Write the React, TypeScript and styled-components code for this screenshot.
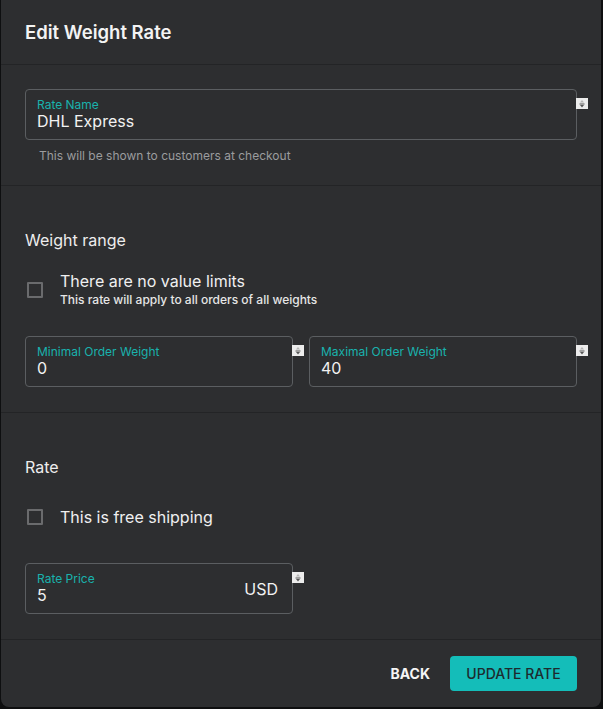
import styled, { createGlobalStyle } from "styled-components";

const GlobalStyle = createGlobalStyle`
  html, body {
    margin: 0;
    padding: 0;
    background: #0e0f10;
  }
  body {
    font-family: Inter, "Noto Sans", "Liberation Sans", sans-serif;
    -webkit-font-smoothing: antialiased;
  }
`;

const Spinner = () => (
  <SpinBox>
    <svg width="12" height="11" viewBox="0 0 12 11">
      <rect width="12" height="11" fill="#ececec" />
      <path d="M4 4.5 L6 2 L8 4.5 Z" fill="#b4b4b4" />
      <rect x="3.5" y="5.5" width="5" height="1" fill="#555" />
      <path d="M4 7 L6 9.5 L8 7 Z" fill="#555" />
    </svg>
  </SpinBox>
);

type FieldProps = {
  label: string;
  value: string;
  suffix?: string;
};

const Field = ({ label, value, suffix }: FieldProps) => (
  <FieldBox>
    <FieldText>
      <FieldLabel>{label}</FieldLabel>
      <FieldValue>{value}</FieldValue>
    </FieldText>
    {suffix && <Suffix>{suffix}</Suffix>}
    <Spinner />
  </FieldBox>
);

export default () => {
  return (
    <>
      <GlobalStyle />
      <Dialog>
        <Header>
          <Title>Edit Weight Rate</Title>
        </Header>

        <Section $top={24} $bottom={21}>
          <Field label="Rate Name" value="DHL Express" />
          <Helper>This will be shown to customers at checkout</Helper>
        </Section>

        <Section $top={42} $bottom={25}>
          <Heading>Weight range</Heading>
          <CheckRow $gap={19}>
            <Box />
            <div>
              <CheckTitle>There are no value limits</CheckTitle>
              <CheckSub>This rate will apply to all orders of all weights</CheckSub>
            </div>
          </CheckRow>
          <FieldGrid $gap={28}>
            <Field label="Minimal Order Weight" value="0" />
            <Field label="Maximal Order Weight" value="40" />
          </FieldGrid>
        </Section>

        <Section $top={42} $bottom={25}>
          <Heading>Rate</Heading>
          <CheckRow $gap={26}>
            <Box />
            <CheckTitle $tall>This is free shipping</CheckTitle>
          </CheckRow>
          <FieldGrid $gap={34}>
            <Field label="Rate Price" value="5" suffix="USD" />
          </FieldGrid>
        </Section>

        <Footer>
          <TextButton>Back</TextButton>
          <PrimaryButton>Update Rate</PrimaryButton>
        </Footer>
      </Dialog>
    </>
  );
};

const Dialog = styled.div`
  width: 600px;
  height: 707px;
  margin-left: 1px;
  background: #2d2e30;
  border-radius: 0 0 8px 8px;
  display: flex;
  flex-direction: column;
  overflow: hidden;
`;

const Header = styled.div`
  height: 64px;
  padding: 0 24px;
  display: flex;
  align-items: center;
  border-bottom: 1px solid #232426;
`;

const Title = styled.h1`
  margin: 0;
  font-size: 18.5px;
  font-weight: 600;
  color: #f3f3f3;
`;

const Section = styled.div<{ $top: number; $bottom: number }>`
  padding: ${({ $top, $bottom }) => `${$top}px 24px ${$bottom}px 24px`};
  border-bottom: 1px solid #232426;
`;

const Heading = styled.div`
  font-size: 16px;
  line-height: 24px;
  color: #ededed;
`;

const CheckRow = styled.div<{ $gap: number }>`
  margin-top: ${({ $gap }) => $gap}px;
  display: flex;
  align-items: center;
  gap: 17px;
  padding-left: 2px;
`;

const Box = styled.span`
  width: 16px;
  height: 16px;
  box-sizing: border-box;
  border: 2px solid #6a6b6d;
  border-radius: 1px;
  flex-shrink: 0;
`;

const CheckTitle = styled.div<{ $tall?: boolean }>`
  font-size: 16px;
  line-height: ${({ $tall }) => ($tall ? 24 : 20)}px;
  color: #f0f0f0;
`;

const CheckSub = styled.div`
  font-size: 12px;
  line-height: 17px;
  font-weight: 500;
  color: #e6e6e6;
`;

const FieldGrid = styled.div<{ $gap: number }>`
  margin-top: ${({ $gap }) => $gap}px;
  display: grid;
  grid-template-columns: 1fr 1fr;
  gap: 16px;
`;

const FieldBox = styled.div`
  position: relative;
  height: 51px;
  box-sizing: border-box;
  border: 1px solid #5b5e61;
  border-radius: 4px;
  padding: 7px 14px 0 11px;
  display: flex;
  align-items: center;
`;

const FieldText = styled.div`
  flex: 1;
  align-self: flex-start;
`;

const FieldLabel = styled.div`
  font-size: 12px;
  line-height: 15px;
  color: #19b2ad;
`;

const FieldValue = styled.div`
  font-size: 16px;
  line-height: 19px;
  color: #f2f2f2;
`;

const Suffix = styled.div`
  font-size: 16px;
  color: #f2f2f2;
  margin-top: -7px;
`;

const SpinBox = styled.div`
  position: absolute;
  right: -12px;
  top: 8px;
  line-height: 0;
`;

const Helper = styled.div`
  margin-top: 8px;
  padding-left: 14px;
  font-size: 12px;
  line-height: 16px;
  color: #9b9c9e;
`;

const Footer = styled.div`
  flex: 1;
  display: flex;
  align-items: center;
  justify-content: flex-end;
  gap: 20px;
  padding: 0 24px 0 0;
`;

const TextButton = styled.button`
  background: none;
  border: none;
  padding: 0;
  font-family: inherit;
  font-size: 14px;
  font-weight: 700;
  text-transform: uppercase;
  color: #f5f5f5;
`;

const PrimaryButton = styled.button`
  height: 35px;
  width: 127px;
  border: none;
  border-radius: 4px;
  background: #14bdb9;
  font-family: inherit;
  font-size: 14px;
  font-weight: 500;
  text-transform: uppercase;
  color: #1d2b2e;
`;
